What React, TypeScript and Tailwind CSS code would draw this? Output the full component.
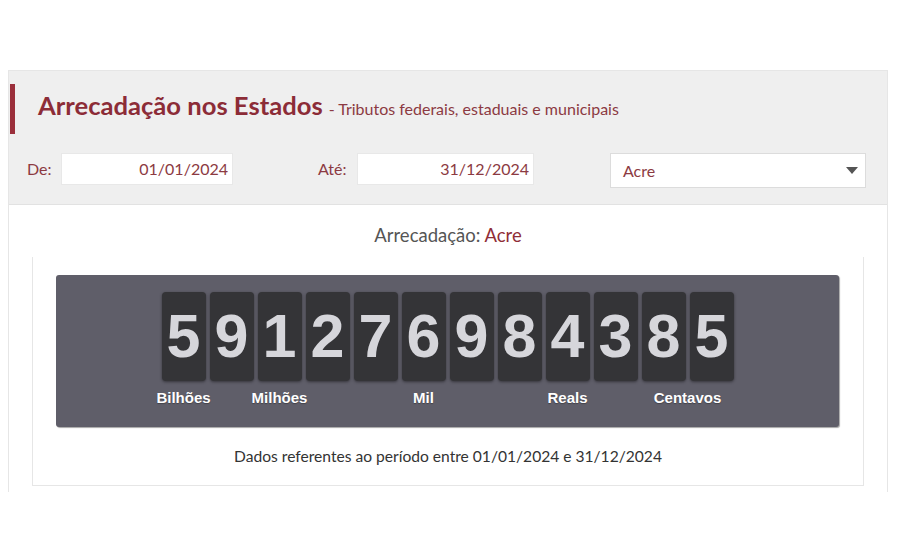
import React from "react";

const digits = "591276984385".split("");

const labels: { col: string; text: string }[] = [
  { col: "col-start-1 col-span-1", text: "Bilhões" },
  { col: "col-start-3 col-span-1", text: "Milhões" },
  { col: "col-start-6 col-span-1", text: "Mil" },
  { col: "col-start-9 col-span-1", text: "Reals" },
  { col: "col-start-11 col-span-2", text: "Centavos" },
];

export default function App() {
  return (
    <div
      className="w-[900px] h-[545px] bg-white pt-[70px] pl-[8px] overflow-hidden"
      style={{ fontFamily: "Lato, 'Open Sans', sans-serif" }}
    >
      <div className="w-[880px] h-[422px] border border-[#e6e6e6] border-b-0 bg-white">
        {/* header */}
        <div className="h-[134px] bg-[#efefef] border-b border-[#e2e2e2]">
          <div className="flex items-end pt-[13px] pl-[1px]">
            <div className="w-[5px] h-[50px] bg-[#9b2f3b]" />
            <div className="ml-[23px] mb-[15px] flex items-baseline">
              <span className="text-[25.6px] leading-none font-bold text-[#8c2c37]">
                Arrecadação nos Estados
              </span>
              <span className="ml-[6px] text-[16px] leading-none text-[#8c3a42]">
                - Tributos federais, estaduais e municipais
              </span>
            </div>
          </div>
          <div className="flex items-center mt-[16px] pl-[18px] text-[16px] text-[#8c3a42]">
            <span className="w-[24px]">De:</span>
            <div className="ml-[10px] w-[172px] h-[32px] bg-white border border-[#e8e8e8] flex items-center justify-end pr-[4px]">
              01/01/2024
            </div>
            <span className="ml-[85px] w-[29px]">Até:</span>
            <div className="ml-[10px] w-[177px] h-[32px] bg-white border border-[#e8e8e8] flex items-center justify-end pr-[4px]">
              31/12/2024
            </div>
            <div className="ml-[76px] w-[256px] h-[35px] mt-[3px] bg-white border border-[#dcdcdc] flex items-center justify-between pl-[12px] pr-[7px]">
              <span>Acre</span>
              <svg width="12" height="7" viewBox="0 0 12 7">
                <path d="M0 0 L12 0 L6 7 Z" fill="#555" />
              </svg>
            </div>
          </div>
        </div>
        {/* body */}
        <div className="pt-[19px]">
          <div className="text-center text-[18.5px] leading-[22px] text-[#555]">
            Arrecadação: <span className="text-[#8f2d37]">Acre</span>
          </div>
          <div className="mt-[11px] ml-[23px] w-[832px] h-[229px] border-l border-r border-b border-[#e6e6e6] pt-[18px] pl-[23px]">
            <div className="w-[783px] h-[152px] bg-[#5f5e69] rounded-[3px] shadow-[1px_1px_1px_rgba(0,0,0,0.35)] flex flex-col items-center pt-[17px]">
              <div
                className="grid grid-cols-[repeat(12,44px)] gap-x-[4px]"
                style={{ fontFamily: "'Liberation Sans', Arial, sans-serif" }}
              >
                {digits.map((d, i) => (
                  <div
                    key={i}
                    className="h-[89px] rounded-[4px] bg-[#343437] shadow-[0_1px_3px_rgba(0,0,0,0.45)] flex items-center justify-center text-[61px] font-bold leading-none text-[#d6d6db]"
                  >
                    {d}
                  </div>
                ))}
                {labels.map((l) => (
                  <div
                    key={l.text}
                    className={`${l.col} row-start-2 flex justify-center mt-[8px]`}
                  >
                    <span className="whitespace-nowrap text-[15px] leading-[18px] font-bold text-white [text-shadow:0_1px_1px_rgba(0,0,0,0.3)]">
                      {l.text}
                    </span>
                  </div>
                ))}
              </div>
            </div>
            <div className="mt-[19px] -ml-[23px] text-center text-[15.6px] leading-[20px] text-[#333]">
              Dados referentes ao período entre 01/01/2024 e 31/12/2024
            </div>
          </div>
        </div>
      </div>
    </div>
  );
}
